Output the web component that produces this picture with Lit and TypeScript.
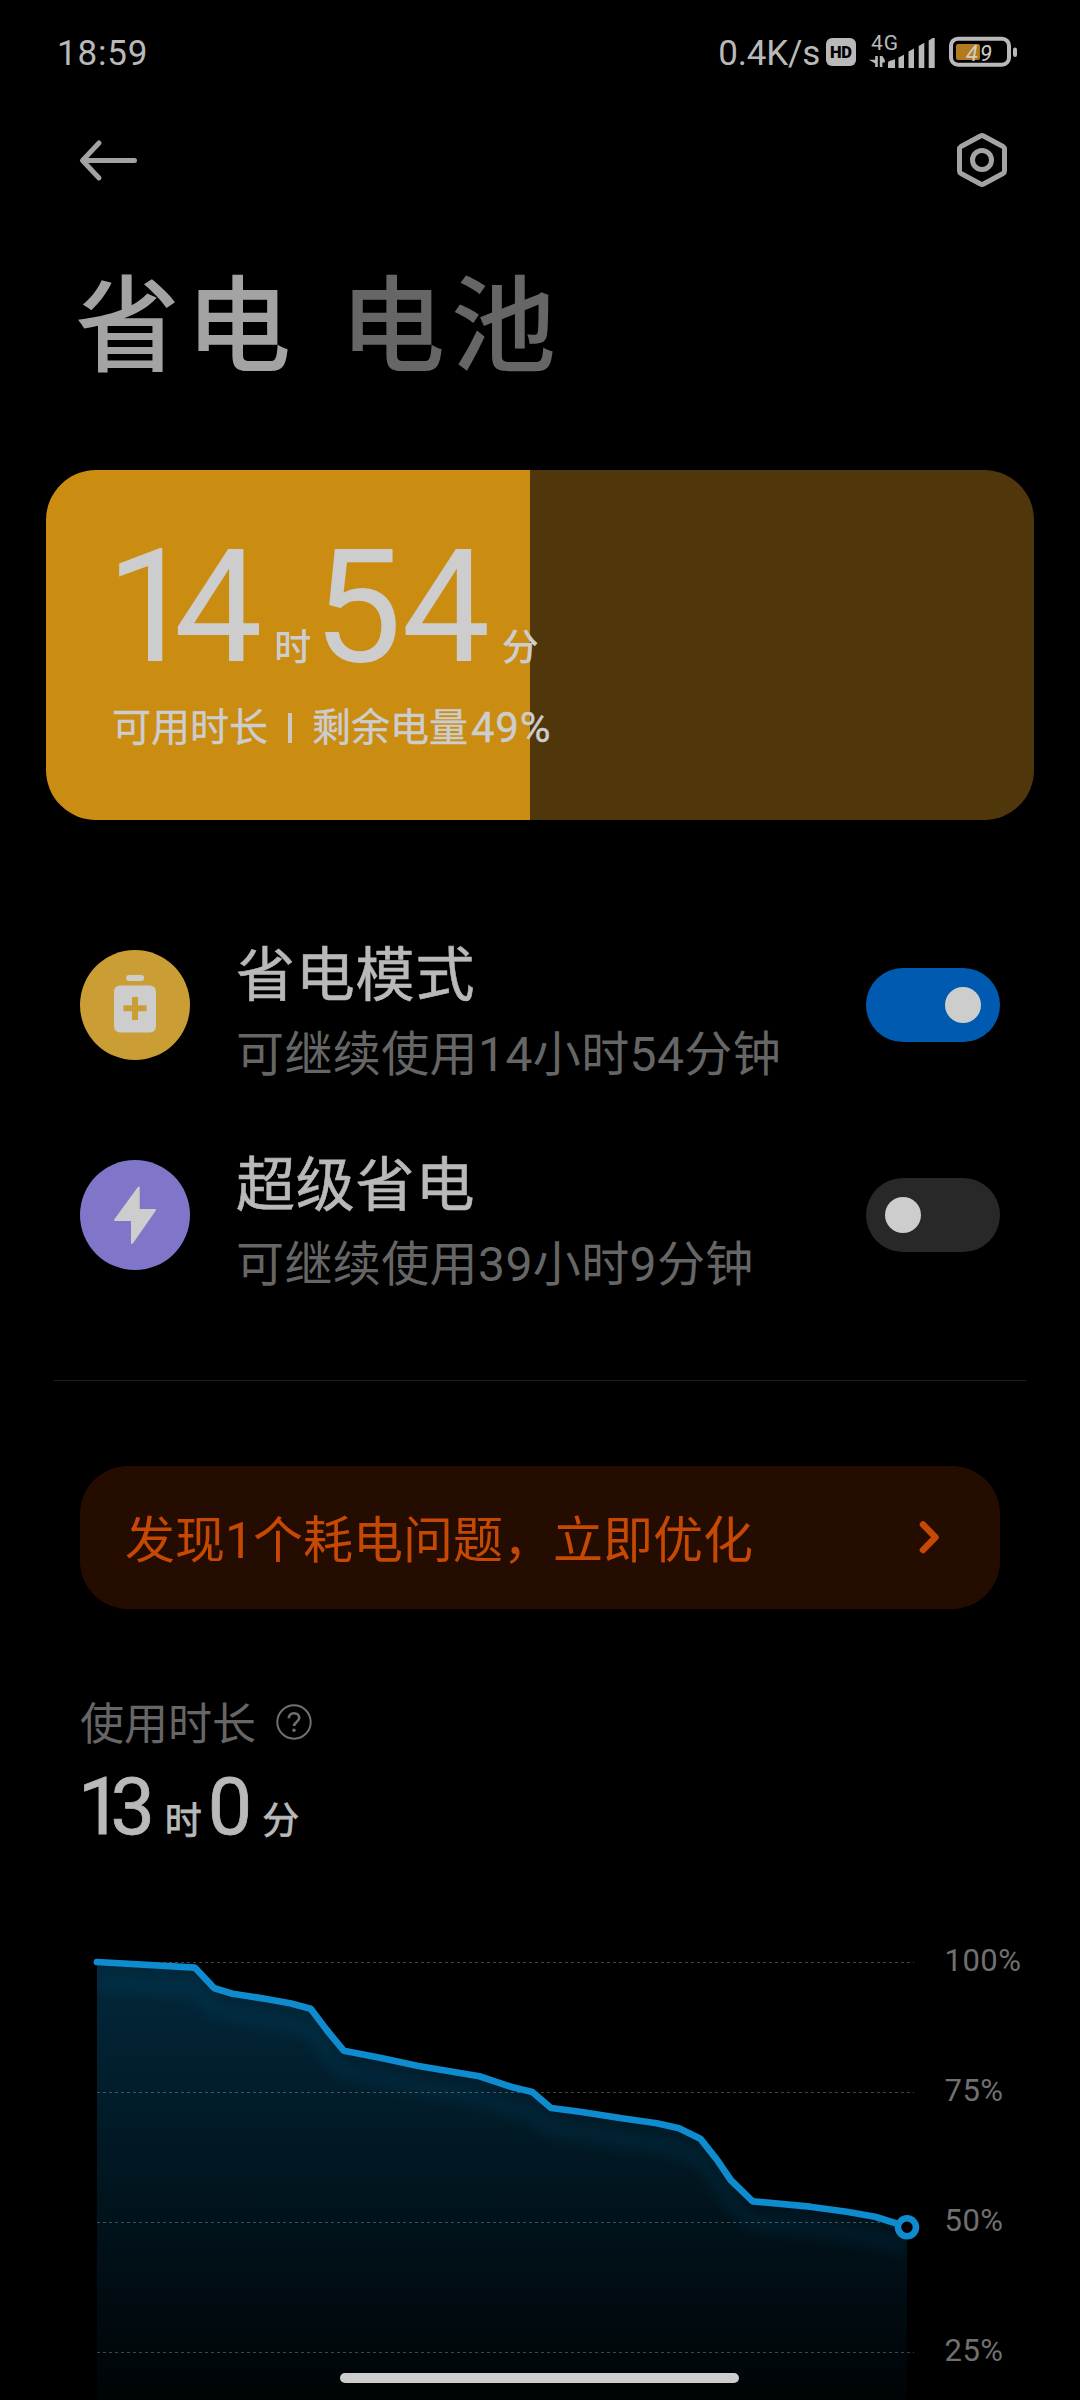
import { LitElement, html, css, svg } from "lit";
import { customElement, property } from "lit/decorators.js";

const LEVELS: [number, number][] = [
  [97, 22], [195, 27.7], [214.3, 48.3], [232.7, 53.7], [265, 58.7], [290, 63.3],
  [310.7, 68.7], [326.7, 90], [343.7, 110.7], [380, 117.7], [418.3, 126],
  [479.3, 136.3], [511.7, 147], [532.3, 152], [551, 168], [580, 171.7],
  [621.7, 178.3], [656.7, 183.3], [679, 188.3], [700.3, 198.7], [716.7, 219.3],
  [730.7, 240], [752.7, 261.3], [810, 266.7], [846.7, 271.7], [875, 276.7],
  [895, 283], [907, 287],
];

const GRID = [
  { y: 22.5, label: "100%" },
  { y: 152.5, label: "75%" },
  { y: 282.5, label: "50%" },
  { y: 412.5, label: "25%" },
];

@customElement("status-bar")
export class StatusBar extends LitElement {
  static styles = css`
    :host {
      display: flex;
      align-items: center;
      justify-content: space-between;
      height: 106px;
      padding: 0 60px 0 57px;
      box-sizing: border-box;
      color: #b9b9b9;
      font-size: 35px;
      line-height: 109px;
    }
    .clock {
      letter-spacing: 0.8px;
    }
    .right {
      display: flex;
      align-items: center;
      height: 106px;
    }
    .speed {
      letter-spacing: -0.2px;
    }
    svg {
      display: block;
    }
  `;

  render() {
    return html`
      <span class="clock">18:59</span>
      <div class="right">
        <span class="speed">0.4K/s</span>
        <svg width="200" height="106" viewBox="820 0 200 106" fill="#b9b9b9">
          <rect x="826" y="38" width="30" height="28" rx="6" />
          <text x="841" y="58" text-anchor="middle" fill="#000" font-size="16.5" font-weight="900" textLength="22">HD</text>
          <text x="871" y="49.5" font-size="21" textLength="27">4G</text>
          <path d="M877.8 56v11h-2.6v-3.6l-6.4-3.6h6.4v-3.8zM879.8 67v-11h2.600l2.400 4v2.600h-2.400v4.400z" />
          <path d="M888 68v-5q0-1.500 1.500-2l5.500-1.800v8.800z" />
          <path d="M898.500 68v-10.500l5.500-2.800v13.300zM908.500 68v-16.500l5.500-3v19.500zM918.700 68v-22l5.600-3.200v25.200zM928.700 68v-27.500l4-2.500h2v30z" />
          <rect x="951" y="38.700" width="58" height="26" rx="7" fill="none" stroke="#b9b9b9" stroke-width="4" />
          <rect x="956" y="44" width="24" height="16" rx="2" fill="#b27a1c" />
          <rect x="1013" y="47.500" width="4" height="9.500" rx="2" />
          <text x="966" y="60.500" font-size="22" font-style="italic" fill="#d0ccc5" textLength="26">49</text>
        </svg>
      </div>
    `;
  }
}

@customElement("toggle-switch")
export class ToggleSwitch extends LitElement {
  @property({ type: Boolean, reflect: true }) on = false;

  static styles = css`
    :host {
      display: flex;
      align-items: center;
      width: 134px;
      height: 74px;
      padding: 0 19px;
      box-sizing: border-box;
      border-radius: 37px;
      background: #282828;
    }
    :host([on]) {
      justify-content: flex-end;
      background: #005bb0;
    }
    .knob {
      width: 36px;
      height: 36px;
      border-radius: 50%;
      background: #cdcdcd;
    }
  `;

  render() {
    return html`<span class="knob"></span>`;
  }
}

@customElement("mode-row")
export class ModeRow extends LitElement {
  @property() heading = "";
  @property() detail = "";
  @property({ type: Boolean }) on = false;

  static styles = css`
    :host {
      display: flex;
      align-items: center;
      height: 210px;
      padding: 0 80px;
    }
    .text {
      flex: 1;
      padding: 14px 0 0 46px;
    }
    .heading {
      font-size: 59px;
      line-height: 74px;
      letter-spacing: 0.8px;
      color: #b9b9b9;
      -webkit-text-stroke: 0.6px #b9b9b9;
    }
    .detail {
      font-size: 48px;
      line-height: 60px;
      margin-top: 12px;
      letter-spacing: 0.4px;
      color: #666;
    }
  `;

  render() {
    return html`
      <slot></slot>
      <div class="text">
        <div class="heading">${this.heading}</div>
        <div class="detail">${this.detail}</div>
      </div>
      <toggle-switch ?on=${this.on}></toggle-switch>
    `;
  }
}

@customElement("battery-chart")
export class BatteryChart extends LitElement {
  static styles = css`
    :host {
      display: block;
    }
    svg {
      display: block;
    }
  `;

  render() {
    const line = "M" + LEVELS.map(([x, y]) => `${x} ${y}`).join("L");
    const area = `${line}V460H97Z`;
    return html`
      <svg width="1080" height="460" viewBox="0 0 1080 460">
        <defs>
          <linearGradient id="fade" gradientUnits="userSpaceOnUse" x1="0" y1="22" x2="0" y2="480">
            <stop offset="0" stop-color="#02283b" />
            <stop offset="0.5" stop-color="#01151f" />
            <stop offset="1" stop-color="#000203" />
          </linearGradient>
          <clipPath id="under"><path d=${area} /></clipPath>
          <filter id="soft" x="-10%" y="-20%" width="120%" height="150%">
            <feGaussianBlur stdDeviation="7" />
          </filter>
        </defs>
        <path d=${area} fill="url(#fade)" />
        <g clip-path="url(#under)">
          <g filter="url(#soft)">
            <path d=${line} transform="translate(0 21)" fill="none" stroke="#0f8bcf" stroke-opacity="0.11" stroke-width="12" />
          </g>
        </g>
        ${GRID.map(
          (g) => svg`
            <line x1="97" x2="914" y1=${g.y} y2=${g.y} stroke="#fff" stroke-opacity="0.26" stroke-width="1" stroke-dasharray="3 3" />
            <text x="944.5" y=${g.y + 8.5} font-size="31" letter-spacing="0.5" fill="#707070">${g.label}</text>`
        )}
        <path d=${line} fill="none" stroke="#0f8bcf" stroke-width="6.700" stroke-linecap="round" stroke-linejoin="bevel" />
        <circle cx="907" cy="287.300" r="9" fill="#000" stroke="#0f8bcf" stroke-width="6.500" />
      </svg>
    `;
  }
}

@customElement("app-root")
export class AppRoot extends LitElement {
  static styles = css`
    :host {
      display: flex;
      flex-direction: column;
      position: relative;
      width: 1080px;
      height: 2400px;
      overflow: hidden;
      background: #000;
      color: #b9b9b9;
      font-family: Roboto, "Noto Sans CJK SC", sans-serif;
    }
    svg {
      display: block;
      flex: none;
    }
    .nav {
      display: flex;
      justify-content: space-between;
      align-items: center;
      height: 108px;
      padding: 0 72px 0 78px;
    }
    .tabs {
      display: flex;
      gap: 43px;
      height: 256px;
      padding-left: 75px;
      font-size: 105px;
      font-weight: 500;
      line-height: 227px;
      letter-spacing: 6px;
      color: #666;
    }
    .tabs .active {
      color: #a3a3a3;
    }
    .card {
      height: 350px;
      margin: 0 46px;
      padding: 57px 64px 0;
      box-sizing: border-box;
      border-radius: 50px;
      background: linear-gradient(90deg, #ca8c11 484px, #50370b 484px);
      color: #cdcdcd;
    }
    .time {
      display: flex;
      align-items: baseline;
      height: 160px;
      margin-left: -4px;
      font-size: 158px;
      line-height: 160px;
      letter-spacing: -0.5px;
    }
    .time .one {
      letter-spacing: -21px;
    }
    .time .unit {
      font-size: 37px;
      font-weight: 500;
      letter-spacing: 0;
      margin: 0 2px 0 12px;
    }
    .left {
      display: flex;
      font-size: 39px;
      line-height: 60px;
      margin-top: 11px;
      padding-left: 2px;
      -webkit-text-stroke: 0.4px #cdcdcd;
    }
    .level {
      font-size: 42px;
      padding-left: 3px;
      letter-spacing: 0.7px;
    }
    .bar {
      width: 4px;
      height: 30px;
      margin: 15px 20px 0 20px;
      background: #cdc9c0;
    }
    .modes {
      margin-top: 80px;
    }
    .disc {
      display: flex;
      width: 110px;
      height: 110px;
      border-radius: 50%;
    }
    .gold {
      background: #cb9e35;
    }
    .violet {
      background: #7f76ca;
    }
    .divider {
      height: 1px;
      margin: 60px 54px 0;
      background: #1e1e1e;
    }
    .banner {
      display: flex;
      align-items: center;
      justify-content: space-between;
      height: 143px;
      margin: 85px 80px 0;
      padding: 0 58px 0 45px;
      box-sizing: border-box;
      border-radius: 48px;
      background: #250c00;
      color: #c54904;
      font-size: 50px;
      line-height: 60px;
    }
    .banner span {
      padding-top: 6px;
    }
    .usage-label {
      display: flex;
      align-items: center;
      gap: 20px;
      height: 60px;
      margin: 83px 80px 0;
      font-size: 44px;
      line-height: 60px;
      color: #666;
    }
    .usage-label span {
      padding-top: 5px;
    }
    .usage {
      display: flex;
      align-items: baseline;
      height: 90px;
      margin: 10px 78px 0;
      font-size: 79px;
      line-height: 90px;
      letter-spacing: -2px;
      -webkit-text-stroke: 0.8px #b9b9b9;
    }
    .usage .one {
      letter-spacing: -12px;
    }
    .usage .unit {
      font-size: 37px;
      letter-spacing: 0;
      margin: 0 6px 0 12px;
    }
    .chart {
      margin-top: 88px;
    }
    .home {
      position: absolute;
      left: 340px;
      top: 2373px;
      width: 399px;
      height: 10px;
      border-radius: 5px;
      background: #cdcdcd;
    }
  `;

  render() {
    return html`
      <status-bar></status-bar>
      <nav class="nav">
        <svg width="62" height="44" viewBox="0 0 62 44" fill="none" stroke="#a3a3a3" stroke-width="5" stroke-linecap="round" stroke-linejoin="round">
          <path d="M56.500 22.500H5M21 5L4.500 22.500L21 40" />
        </svg>
        <svg width="52" height="56" viewBox="0 0 52 56" fill="none" stroke="#a3a3a3" stroke-width="5">
          <path stroke-linejoin="round" d="M24.500 4Q26 3 27.500 4L47 14.500Q48.500 15.500 48.500 17V39Q48.500 40.500 47 41.500L27.500 52Q26 53 24.500 52L5 41.500Q3.500 40.500 3.500 39V17Q3.500 15.500 5 14.500Z" />
          <circle cx="26" cy="28" r="9.500" />
        </svg>
      </nav>
      <div class="tabs"><span class="active">省电</span><span>电池</span></div>

      <section class="card">
        <div class="time">
          <span><span class="one">1</span>4</span><span class="unit">时</span><span>54</span><span class="unit">分</span>
        </div>
        <div class="left"><span>可用时长</span><span class="bar"></span><span>剩余电量</span><span class="level">49%</span></div>
      </section>

      <section class="modes">
        <mode-row heading="省电模式" detail="可继续使用14小时54分钟" on>
          <span class="disc gold">
            <svg width="110" height="110" viewBox="0 0 110 110" fill="#cdcdcd">
              <rect x="46" y="25" width="18" height="6" rx="3" />
              <rect x="34" y="35.500" width="42" height="47" rx="6" />
              <path d="M55 50v17M46.500 58.300h17" stroke="#cb9e35" stroke-width="6" stroke-linecap="square" />
            </svg>
          </span>
        </mode-row>
        <mode-row heading="超级省电" detail="可继续使用39小时9分钟">
          <span class="disc violet">
            <svg width="110" height="110" viewBox="0 0 110 110" fill="#cdcdcd" stroke="#cdcdcd" stroke-width="2" stroke-linejoin="round">
              <path d="M58.700 27.500V50H75L52 83V60H35Z" />
            </svg>
          </span>
        </mode-row>
      </section>

      <div class="divider"></div>

      <section class="banner">
        <span>发现1个耗电问题，立即优化</span>
        <svg width="24" height="36" viewBox="0 0 24 36" fill="none" stroke="#c54904" stroke-width="6.500" stroke-linecap="round" stroke-linejoin="round">
          <path d="M5 4.500L17.500 17.300L5 30" />
        </svg>
      </section>

      <div class="usage-label">
        <span>使用时长</span>
        <svg width="36" height="36" viewBox="0 0 36 36" fill="none" stroke="#707070" stroke-width="2">
          <circle cx="18" cy="18" r="16.700" />
          <path d="M12.800 14.200c0-3 2.200-5 5.200-5s5.200 2 5.200 4.600c0 4-5.200 4.200-5.200 8.200" stroke-width="2.600" />
          <circle cx="18" cy="26.200" r="1.700" fill="#707070" stroke="none" />
        </svg>
      </div>
      <div class="usage">
        <span><span class="one">1</span>3</span><span class="unit">时</span><span>0</span><span class="unit">分</span>
      </div>

      <battery-chart class="chart"></battery-chart>
      <div class="home"></div>
    `;
  }
}
